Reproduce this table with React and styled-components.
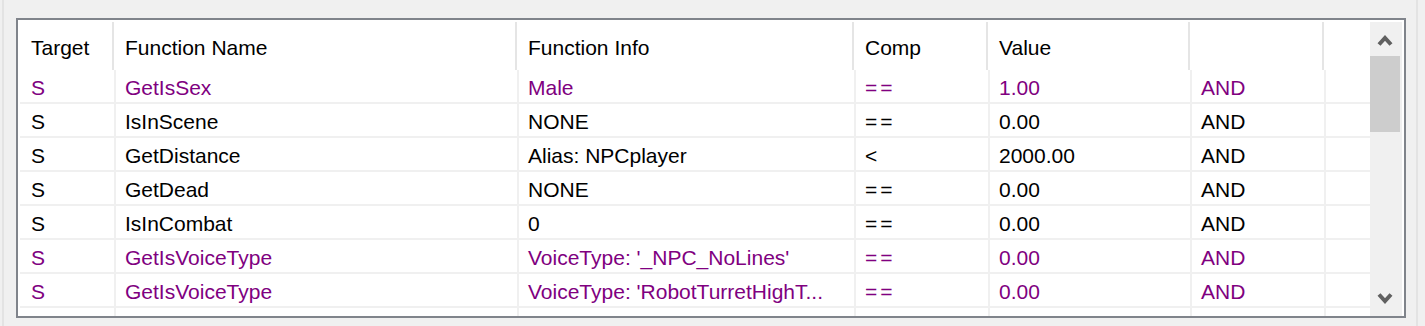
import React from 'react'
import styled, { createGlobalStyle } from 'styled-components'

const GlobalStyle = createGlobalStyle`
  html, body {
    margin: 0;
    padding: 0;
    background: #f0f0f0;
  }
  body {
    font-family: "Liberation Sans", Arial, sans-serif;
    font-size: 21px;
    color: #000;
  }
`

// row separators: 116, 519, 856, 990, 1192, 1326
const COLS = '96px 403px 337px 134px 202px 134px 1fr'
// header separators sit 2px left of the row ones
const HEAD_COLS = '94px 403px 337px 134px 202px 134px 1fr'

const Frame = styled.div`
  height: 326px;
  margin: 0 7px 0 2px;
  padding: 18px 10px 0 12px;
  box-sizing: border-box;
  border-left: 2px solid #e3e3e3;
  border-right: 2px solid #e3e3e3;
`

const ListBox = styled.div`
  height: 300px;
  box-sizing: border-box;
  border: 2px solid #80848b;
  background: #fff;
  padding: 2px 2px 0 2px;
  display: flex;
`

const TableArea = styled.div`
  flex: 1;
  overflow: hidden;
`

const HeadRow = styled.div`
  display: grid;
  grid-template-columns: ${HEAD_COLS};
  height: 48px;
`

const HeadCell = styled.div`
  display: flex;
  align-items: center;
  padding: 3px 0 0 11px;
  border-right: ${p => (p.$last ? 'none' : '2px solid #e5e5e5')};
  white-space: nowrap;
`

const Row = styled.div`
  display: grid;
  grid-template-columns: ${COLS};
  height: 34px;
  color: ${p => (p.$purple ? '#800080' : '#000')};
`

const Cell = styled.div`
  display: flex;
  align-items: center;
  box-sizing: border-box;
  padding: 4px 0 0 ${p => (p.$first ? '11px' : '9px')};
  border-bottom: 2px solid #f0f0f0;
  border-right: ${p => (p.$last ? 'none' : '2px solid #f0f0f0')};
  white-space: nowrap;
  overflow: hidden;
  letter-spacing: ${p => (p.$wide ? '3px' : 'normal')};
`

const ScrollBar = styled.div`
  width: 32px;
  display: flex;
  flex-direction: column;
  background: #f0f0f0;
`

const ArrowButton = styled.div`
  height: 34px;
  display: flex;
  align-items: center;
  justify-content: center;
  padding-right: 2px;
`

const Track = styled.div`
  flex: 1;
`

const Thumb = styled.div`
  height: 76px;
  background: #cdcdcd;
  margin-right: 2px;
`

const Chevron = ({ up }) => (
  <svg width="16" height="13" viewBox="0 0 16 13">
    <polyline
      points={up ? '2,11.5 8,5 14,11.5' : '2,1.5 8,8 14,1.5'}
      fill="none"
      stroke="#606060"
      strokeWidth="4"
      strokeLinecap="butt"
      strokeLinejoin="miter"
    />
  </svg>
)

const headers = ['Target', 'Function Name', 'Function Info', 'Comp', 'Value', '']

const rows = [
  { purple: true, cells: ['S', 'GetIsSex', 'Male', '==', '1.00', 'AND'] },
  { cells: ['S', 'IsInScene', 'NONE', '==', '0.00', 'AND'] },
  { cells: ['S', 'GetDistance', 'Alias: NPCplayer', '<', '2000.00', 'AND'] },
  { cells: ['S', 'GetDead', 'NONE', '==', '0.00', 'AND'] },
  { cells: ['S', 'IsInCombat', '0', '==', '0.00', 'AND'] },
  { purple: true, cells: ['S', 'GetIsVoiceType', "VoiceType: '_NPC_NoLines'", '==', '0.00', 'AND'] },
  { purple: true, cells: ['S', 'GetIsVoiceType', "VoiceType: 'RobotTurretHighT...", '==', '0.00', 'AND'] },
  { cells: ['', '', '', '', '', ''] },
]

export default function App() {
  return (
    <>
      <GlobalStyle />
      <Frame>
        <ListBox>
          <TableArea>
            <HeadRow>
              {headers.map((h, i) => (
                <HeadCell key={i}>{h}</HeadCell>
              ))}
              <HeadCell $last />
            </HeadRow>
            {rows.map((r, i) => (
              <Row key={i} $purple={r.purple}>
                {r.cells.map((c, j) => (
                  <Cell key={j} $first={j === 0} $wide={c === '=='}>{c}</Cell>
                ))}
                <Cell $last />
              </Row>
            ))}
          </TableArea>
          <ScrollBar>
            <ArrowButton><Chevron up /></ArrowButton>
            <Track>
              <Thumb />
            </Track>
            <ArrowButton><Chevron /></ArrowButton>
          </ScrollBar>
        </ListBox>
      </Frame>
    </>
  )
}
